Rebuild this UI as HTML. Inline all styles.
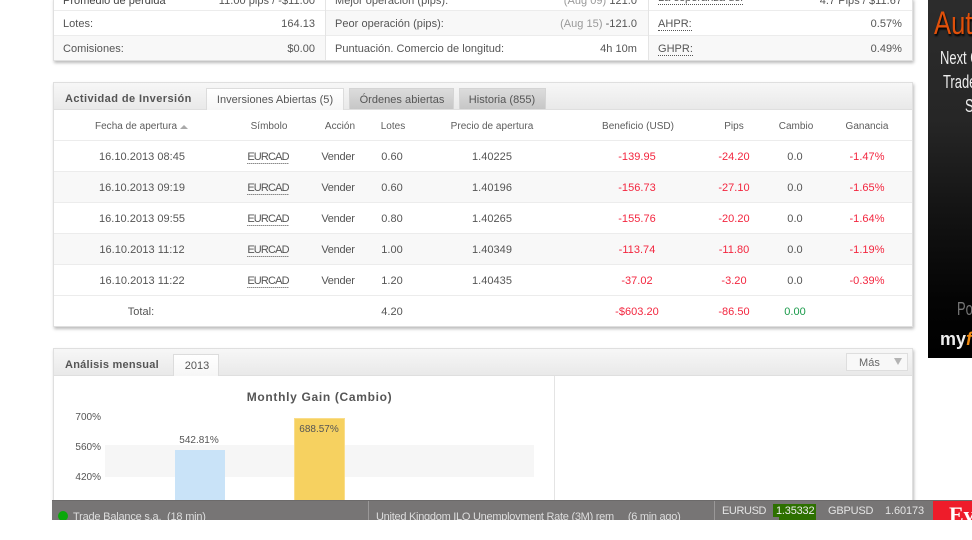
<!DOCTYPE html>
<html><head><meta charset="utf-8">
<style>
html,body{margin:0;padding:0;background:#fff}
#p{position:relative;width:972px;height:540px;overflow:hidden;background:#fff;font:11px "Liberation Sans",sans-serif;color:#555}
#p div{position:absolute;box-sizing:border-box}
.t{white-space:nowrap;line-height:14px;letter-spacing:.03px}
.c{transform:translateX(-50%)}
.r{transform:translateX(-100%)}
.red{color:#f3263f}
.u{border-bottom:1px dotted #555;line-height:12px}
.s{letter-spacing:-.85px}
.v{letter-spacing:-.25px}
.h{font-size:10px;color:#5c5c5c;letter-spacing:.02px}
.bar{background:linear-gradient(#f7f7f7,#e9e9e9)}
.tab{background:linear-gradient(#fff,#f6f6f6);border:1px solid #dcdcdc;border-bottom:0}
.tab2{background:linear-gradient(#dcdcdc,#c6c6c6);border:1px solid #d4d4d4;border-bottom:0}
</style></head><body><div id="p">

<!-- top panel -->
<div style="left:53px;top:-2px;width:860px;height:63px;background:#fff;border:1px solid #dfdfdf;border-top:0;box-shadow:1px 2px 3px #bbb"></div>
<div style="left:54px;top:35px;width:271px;height:25px;background:#f8f8f8"></div>
<div style="left:326px;top:11px;width:322px;height:24px;background:#f8f8f8"></div>
<div style="left:649px;top:36px;width:263px;height:24px;background:#f8f8f8"></div>
<div style="left:54px;top:10px;width:858px;height:1px;background:#ececec"></div>
<div style="left:54px;top:35px;width:858px;height:1px;background:#ececec"></div>
<div style="left:325px;top:0;width:1px;height:60px;background:#e4e4e4"></div>
<div style="left:648px;top:0;width:1px;height:60px;background:#e4e4e4"></div>

<div class="t" style="left:63px;top:-6px;color:#444">Promedio de pérdida</div>
<div class="t r" style="left:315px;top:-6px">11.00 pips / -$11.00</div>
<div class="t" style="left:335px;top:-6px">Mejor operación (pips):</div>
<div class="t r" style="left:637px;top:-6px"><span style="color:#999">(Aug 09)</span> 121.0</div>
<div class="t u" style="left:658px;top:-8px">La esperanza del</div>
<div class="t r" style="left:902px;top:-6px">4.7 Pips / $11.67</div>

<div class="t" style="left:63px;top:17px">Lotes:</div>
<div class="t r" style="left:315px;top:17px">164.13</div>
<div class="t" style="left:335px;top:17px">Peor operación (pips):</div>
<div class="t r" style="left:637px;top:17px"><span style="color:#999">(Aug 15)</span> -121.0</div>
<div class="t u" style="left:658px;top:18px">AHPR:</div>
<div class="t r" style="left:902px;top:17px">0.57%</div>

<div class="t" style="left:63px;top:42px">Comisiones:</div>
<div class="t r" style="left:315px;top:42px">$0.00</div>
<div class="t" style="left:335px;top:42px">Puntuación. Comercio de longitud:</div>
<div class="t r" style="left:637px;top:42px">4h 10m</div>
<div class="t u" style="left:658px;top:43px">GHPR:</div>
<div class="t r" style="left:902px;top:42px">0.49%</div>

<!-- activity panel -->
<div style="left:53px;top:82px;width:860px;height:245px;background:#fff;border:1px solid #dfdfdf;box-shadow:1px 2px 3px #bbb"></div>
<div class="bar" style="left:54px;top:83px;width:858px;height:26px"></div>
<div style="left:54px;top:109px;width:858px;height:1px;background:#dfdfdf"></div>
<div class="t" style="left:65px;top:92px;font-weight:bold;color:#555;letter-spacing:.43px">Actividad de Inversión</div>
<div class="tab" style="left:206px;top:88px;width:138px;height:22px"></div>
<div class="t c" style="left:275px;top:93px">Inversiones Abiertas (5)</div>
<div class="tab2" style="left:349px;top:88px;width:105px;height:21px"></div>
<div class="t c" style="left:402px;top:93px">Órdenes abiertas</div>
<div class="tab2" style="left:459px;top:88px;width:87px;height:21px"></div>
<div class="t c" style="left:502px;top:93px">Historia (855)</div>

<div style="left:54px;top:172px;width:858px;height:30px;background:#f8f8f8"></div>
<div style="left:54px;top:234px;width:858px;height:30px;background:#f8f8f8"></div>
<div style="left:54px;top:140px;width:858px;height:1px;background:#ececec"></div>
<div style="left:54px;top:171px;width:858px;height:1px;background:#ececec"></div>
<div style="left:54px;top:202px;width:858px;height:1px;background:#ececec"></div>
<div style="left:54px;top:233px;width:858px;height:1px;background:#ececec"></div>
<div style="left:54px;top:264px;width:858px;height:1px;background:#ececec"></div>
<div style="left:54px;top:295px;width:858px;height:1px;background:#ececec"></div>

<div class="t h c" style="left:136px;top:120px">Fecha de apertura</div>
<div style="left:180px;top:125px;width:0;height:0;border:4px solid transparent;border-top:0;border-bottom:4px solid #aaa"></div>
<div class="t h c" style="left:269px;top:120px">Símbolo</div>
<div class="t h c" style="left:340px;top:120px">Acción</div>
<div class="t h c" style="left:393px;top:120px">Lotes</div>
<div class="t h c" style="left:492px;top:120px">Precio de apertura</div>
<div class="t h c" style="left:638px;top:120px">Beneficio (USD)</div>
<div class="t h c" style="left:734px;top:120px">Pips</div>
<div class="t h c" style="left:796px;top:120px">Cambio</div>
<div class="t h c" style="left:867px;top:120px">Ganancia</div>

<!-- row 1 -->
<div class="t c" style="left:142px;top:150px">16.10.2013 08:45</div>
<div class="t u c s" style="left:268px;top:151px">EURCAD</div>
<div class="t c v" style="left:338px;top:150px">Vender</div>
<div class="t c" style="left:392px;top:150px">0.60</div>
<div class="t c" style="left:492px;top:150px">1.40225</div>
<div class="t c red" style="left:637px;top:150px">-139.95</div>
<div class="t c red" style="left:734px;top:150px">-24.20</div>
<div class="t c" style="left:795px;top:150px">0.0</div>
<div class="t c red" style="left:867px;top:150px">-1.47%</div>
<!-- row 2 -->
<div class="t c" style="left:142px;top:181px">16.10.2013 09:19</div>
<div class="t u c s" style="left:268px;top:182px">EURCAD</div>
<div class="t c v" style="left:338px;top:181px">Vender</div>
<div class="t c" style="left:392px;top:181px">0.60</div>
<div class="t c" style="left:492px;top:181px">1.40196</div>
<div class="t c red" style="left:637px;top:181px">-156.73</div>
<div class="t c red" style="left:734px;top:181px">-27.10</div>
<div class="t c" style="left:795px;top:181px">0.0</div>
<div class="t c red" style="left:867px;top:181px">-1.65%</div>
<!-- row 3 -->
<div class="t c" style="left:142px;top:212px">16.10.2013 09:55</div>
<div class="t u c s" style="left:268px;top:213px">EURCAD</div>
<div class="t c v" style="left:338px;top:212px">Vender</div>
<div class="t c" style="left:392px;top:212px">0.80</div>
<div class="t c" style="left:492px;top:212px">1.40265</div>
<div class="t c red" style="left:637px;top:212px">-155.76</div>
<div class="t c red" style="left:734px;top:212px">-20.20</div>
<div class="t c" style="left:795px;top:212px">0.0</div>
<div class="t c red" style="left:867px;top:212px">-1.64%</div>
<!-- row 4 -->
<div class="t c" style="left:142px;top:243px">16.10.2013 11:12</div>
<div class="t u c s" style="left:268px;top:244px">EURCAD</div>
<div class="t c v" style="left:338px;top:243px">Vender</div>
<div class="t c" style="left:392px;top:243px">1.00</div>
<div class="t c" style="left:492px;top:243px">1.40349</div>
<div class="t c red" style="left:637px;top:243px">-113.74</div>
<div class="t c red" style="left:734px;top:243px">-11.80</div>
<div class="t c" style="left:795px;top:243px">0.0</div>
<div class="t c red" style="left:867px;top:243px">-1.19%</div>
<!-- row 5 -->
<div class="t c" style="left:142px;top:274px">16.10.2013 11:22</div>
<div class="t u c s" style="left:268px;top:275px">EURCAD</div>
<div class="t c v" style="left:338px;top:274px">Vender</div>
<div class="t c" style="left:392px;top:274px">1.20</div>
<div class="t c" style="left:492px;top:274px">1.40435</div>
<div class="t c red" style="left:637px;top:274px">-37.02</div>
<div class="t c red" style="left:734px;top:274px">-3.20</div>
<div class="t c" style="left:795px;top:274px">0.0</div>
<div class="t c red" style="left:867px;top:274px">-0.39%</div>
<!-- total -->
<div class="t c" style="left:141px;top:305px">Total:</div>
<div class="t c" style="left:392px;top:305px">4.20</div>
<div class="t c red" style="left:637px;top:305px">-$603.20</div>
<div class="t c red" style="left:734px;top:305px">-86.50</div>
<div class="t c" style="left:795px;top:305px;color:#1a9a4a">0.00</div>

<!-- monthly panel -->
<div style="left:53px;top:348px;width:860px;height:180px;background:#fff;border:1px solid #dfdfdf;box-shadow:1px 2px 3px #bbb"></div>
<div class="bar" style="left:54px;top:349px;width:858px;height:26px"></div>
<div style="left:54px;top:375px;width:858px;height:1px;background:#dfdfdf"></div>
<div class="t" style="left:65px;top:358px;font-weight:bold;color:#555;letter-spacing:.25px">Análisis mensual</div>
<div class="tab" style="left:173px;top:354px;width:46px;height:22px"></div>
<div class="t c" style="left:197px;top:359px">2013</div>
<div style="left:846px;top:353px;width:62px;height:18px;background:#f8f8f8;border:1px solid #dedede"></div>
<div class="t" style="left:859px;top:356px;font-size:11px;color:#666">Más</div>
<div style="left:894px;top:358px;width:0;height:0;border:4.5px solid transparent;border-bottom:0;border-top:7px solid #b4b4b4"></div>
<div style="left:554px;top:376px;width:1px;height:124px;background:#e4e4e4"></div>

<div class="t c" style="left:319.5px;top:390px;font-size:12px;font-weight:bold;color:#555;letter-spacing:.68px">Monthly Gain (Cambio)</div>
<div style="left:105px;top:445px;width:429px;height:32px;background:#f6f6f6"></div>
<div class="t r" style="left:101px;top:411px;font-size:10px;letter-spacing:0">700%</div>
<div class="t r" style="left:101px;top:441px;font-size:10px;letter-spacing:0">560%</div>
<div class="t r" style="left:101px;top:471px;font-size:10px;letter-spacing:0">420%</div>
<div style="left:175px;top:450px;width:50px;height:50px;background:#c9e3f8"></div>
<div style="left:294px;top:418px;width:51px;height:82px;background:#f6d160;border:1px solid #fadd8a;border-bottom:0"></div>
<div class="t c" style="left:199px;top:434px;font-size:10px;letter-spacing:0">542.81%</div>
<div class="t c" style="left:319px;top:423px;font-size:10px;letter-spacing:0">688.57%</div>

<!-- ad -->
<div style="left:928px;top:0;width:44px;height:358px;background:linear-gradient(#2c2c2c,#262626 120px,#141414 210px,#040404 300px,#000)"></div>
<div class="t" style="left:934px;top:7px;font-size:32px;line-height:32px;color:#e0500a;letter-spacing:0;transform:scaleX(.8);transform-origin:0 0;text-shadow:1px 2px 2px #000">Auto</div>
<div class="t" style="left:940px;top:49px;font-size:18px;line-height:18px;color:#eee;letter-spacing:0;transform:scaleX(.72);transform-origin:0 0">Next Gen</div>
<div class="t" style="left:943px;top:73px;font-size:18px;line-height:18px;color:#eee;letter-spacing:0;transform:scaleX(.72);transform-origin:0 0">Trade</div>
<div class="t" style="left:965px;top:97px;font-size:18px;line-height:18px;color:#eee;letter-spacing:0;transform:scaleX(.72);transform-origin:0 0">S</div>
<div class="t" style="left:957px;top:300px;font-size:18px;line-height:19px;color:#777;letter-spacing:0;transform:scaleX(.72);transform-origin:0 0">Po</div>
<div class="t" style="left:940px;top:330px;font-size:18px;line-height:18px;font-weight:bold;color:#eee;letter-spacing:0">my<span style="color:#f08a10;font-style:italic">f</span></div>

<!-- bottom ticker -->
<div style="left:52px;top:500px;width:920px;height:20px;background:#777575;border-top:1px solid #6c6a6a;overflow:hidden">
 <div style="left:6px;top:10px;width:10px;height:10px;border-radius:50%;background:#0aa80a"></div>
 <div class="t" style="left:21px;top:9px;color:#ddd;letter-spacing:-.2px">Trade Balance s.a.&nbsp; (18 min)</div>
 <div style="left:316px;top:0;width:1px;height:20px;background:#9a9898"></div>
 <div class="t" style="left:324px;top:9px;color:#ddd;letter-spacing:-.27px">United Kingdom ILO Unemployment Rate (3M) rem &nbsp;&nbsp;&nbsp; (6 min ago)</div>
 <div style="left:662px;top:0;width:1px;height:20px;background:#9a9898"></div>
 <div class="t" style="left:670px;top:3px;color:#e4e4e4;letter-spacing:-.4px">EURUSD</div>
 <div style="left:721px;top:3px;width:43px;height:13px;background:#2d7000"></div>
 <div style="left:727px;top:3px;width:37px;height:17px;background:#2d7000"></div>
 <div class="t" style="left:724px;top:3px;color:#eee;letter-spacing:-.2px">1.35332</div>
 <div class="t" style="left:776px;top:3px;color:#e4e4e4;letter-spacing:-.2px">GBPUSD</div>
 <div class="t" style="left:833px;top:3px;color:#e4e4e4;letter-spacing:-.1px">1.60173</div>
 <div style="left:881px;top:-1px;width:39px;height:21px;background:#ee1c2a;overflow:hidden">
  <div style="left:16px;top:3px;font:bold 22px/24px 'Liberation Serif',serif;color:#fff;white-space:nowrap">Ev</div>
 </div>
</div>
<div style="left:0;top:520px;width:972px;height:20px;background:#fff"></div>
</div></body></html>
